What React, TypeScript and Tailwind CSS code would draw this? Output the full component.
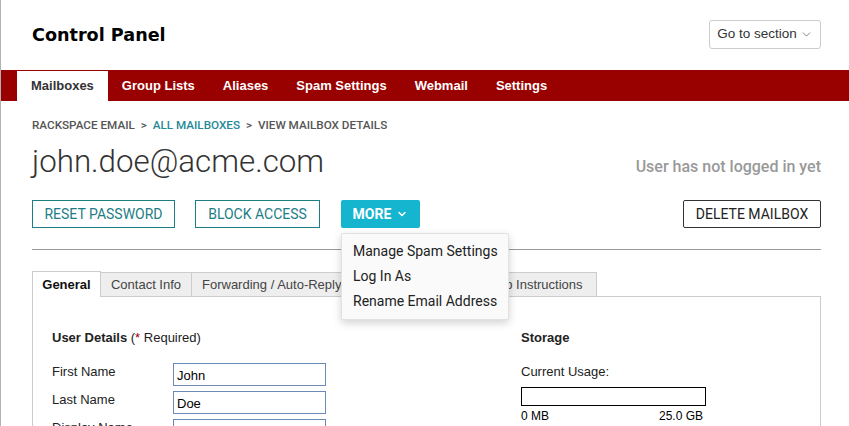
import { ChevronDown } from 'lucide-react';

const navItems = ['Mailboxes', 'Group Lists', 'Aliases', 'Spam Settings', 'Webmail', 'Settings'];

function Field({ label, value }: { label: string; value: string }) {
  return (
    <div className="flex h-[28px]">
      <div className="w-[121px] pt-[1px] leading-[15px]">{label}</div>
      <div className="h-[23px] w-[153px] border border-[#6b8bb5] px-[3px] pt-[4px] leading-[15px] text-black">
        {value}
      </div>
    </div>
  );
}

export default function App() {
  return (
    <div className="h-[426px] w-[849px] overflow-hidden border-l border-[#b3b3b3] bg-white font-['Liberation_Sans',Arial,sans-serif] text-[13px] text-[#222]">
      {/* Header */}
      <div className="flex h-[70px] items-center justify-between pl-[31px] pr-[28px]">
        <h1 className="mt-[1px] font-['DejaVu_Sans',sans-serif] text-[17.6px] font-bold text-black">Control Panel</h1>
        <button className="mt-[-1px] flex h-[29px] w-[112px] items-center justify-center gap-[3px] rounded-[3px] border border-[#ccc] text-[13.5px] text-[#333]">
          Go to section
          <ChevronDown className="h-[13px] w-[13px] text-[#666]" strokeWidth={1.5} />
        </button>
      </div>

      {/* Nav */}
      <div className="flex h-[31px] bg-[#990000] pl-[16px]">
        {navItems.map((item, i) => (
          <div
            key={item}
            className={
              i === 0
                ? 'mt-[1px] flex h-[30px] items-center bg-white px-[14px] text-[13px] font-bold text-[#333]'
                : 'flex items-center px-[14px] text-[13px] font-bold text-white'
            }
          >
            {item}
          </div>
        ))}
      </div>

      {/* Main */}
      <div className="pl-[31px] pr-[28px]">
        <div className="mt-[17px] font-['Roboto',sans-serif] text-[11.7px] font-medium leading-[14px] text-[#555]">
          RACKSPACE EMAIL <span className="mx-[3px]">&gt;</span>{' '}
          <span className="text-[#1f8a98]">ALL MAILBOXES</span> <span className="mx-[3px]">&gt;</span> VIEW MAILBOX DETAILS
        </div>

        <div className="mt-[12px] flex items-center justify-between">
          <div className="font-['Roboto',sans-serif] text-[31.3px] font-light leading-[36px] text-[#333]">
            john.doe@acme.com
          </div>
          <div className="mt-[10px] font-['Roboto',sans-serif] text-[16px] font-medium text-[#999]">
            User has not logged in yet
          </div>
        </div>

        {/* Actions */}
        <div className="relative mt-[20px] flex h-[28px] items-stretch font-['Roboto',sans-serif] text-[14px]">
          <button className="w-[143px] border border-[#1c7d85] text-[#1c7d85]">RESET PASSWORD</button>
          <button className="ml-[20px] w-[125px] border border-[#1c7d85] text-[#1c7d85]">BLOCK ACCESS</button>
          <button className="ml-[21px] flex w-[79px] items-center justify-center gap-[5px] rounded-[2px] bg-[#15b4cf] font-bold text-white">
            MORE
            <ChevronDown className="h-[12px] w-[12px]" strokeWidth={3} />
          </button>
          <button className="ml-auto w-[138px] rounded-[2px] border border-[#333] text-[#222]">DELETE MAILBOX</button>

          <div className="absolute left-[309px] top-[33px] z-10 w-[168px] rounded-[2px] border border-[#e2e2e2] bg-[#fafafa] py-[5px] pl-[11px] text-[14px] leading-[25px] text-[#222] shadow-[0_3px_8px_rgba(0,0,0,0.18)]">
            <div>Manage Spam Settings</div>
            <div>Log In As</div>
            <div>Rename Email Address</div>
          </div>
        </div>

        <div className="mt-[21px] border-t border-[#999]" />

        {/* Tabs */}
        <div className="mt-[21px] flex h-[26px]">
          <div className="z-[1] flex w-[69px] items-center justify-center border border-b-0 border-[#ccc] bg-white font-bold text-[#111]">
            General
          </div>
          <div className="mt-[1px] flex w-[91px] items-center justify-center border-y border-r border-[#ccc] bg-[#eee] text-[#444]">
            Contact Info
          </div>
          <div className="mt-[1px] flex w-[171px] items-center border-y border-r border-[#ccc] bg-[#eee] pl-[10px] text-[#444]">
            Forwarding / Auto-Reply
          </div>
          <div className="mt-[1px] w-[102px] border-y border-r border-[#ccc] bg-[#eee]" />
          <div className="mt-[1px] flex w-[132px] items-center justify-center border-y border-r border-[#ccc] bg-[#eee] text-[#444]">
            Setup Instructions
          </div>
        </div>

        {/* Panel */}
        <div className="-mt-[1px] flex h-[200px] border border-[#ccc] pl-[19px] pt-[33px]">
          <div className="w-[469px]">
            <div className="leading-[15px]">
              <span className="font-bold">User Details</span> (<span className="text-[#990000]">*</span> Required)
            </div>
            <div className="mt-[18px]">
              <Field label="First Name" value="John" />
              <Field label="Last Name" value="Doe" />
              <Field label="Display Name" value="John Doe" />
            </div>
          </div>
          <div className="w-[185px]">
            <div className="font-bold leading-[15px]">Storage</div>
            <div className="mt-[19px] leading-[15px]">Current Usage:</div>
            <div className="mt-[8px] h-[19px] w-[185px] border border-black" />
            <div className="mt-[3px] flex justify-between pr-[3px] text-[12px] leading-[14px] text-black">
              <span>0 MB</span>
              <span>25.0 GB</span>
            </div>
          </div>
        </div>
      </div>
    </div>
  );
}
